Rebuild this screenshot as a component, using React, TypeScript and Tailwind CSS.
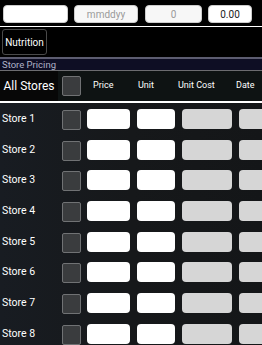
import React from "react";

const stores = ["Store 1", "Store 2", "Store 3", "Store 4", "Store 5", "Store 6", "Store 7", "Store 8"];

function Check() {
  return <div className="w-[19px] h-[20px] shrink-0 rounded-[2px] border border-[#707274] bg-[#3a3c3e]" />;
}

function StoreRow({ name }: { name: string }) {
  return (
    <div className="flex h-[30.67px] items-start">
      <div className="w-[62px] shrink-0 pl-[2px] pt-[10px] text-[10.5px] leading-[12px] text-white">{name}</div>
      <div className="mt-[7px]">
        <Check />
      </div>
      <div className="ml-[6px] mt-[6px] h-[20px] w-[43px] shrink-0 rounded-[4px] bg-white" />
      <div className="ml-[7px] mt-[6px] h-[20px] w-[38px] shrink-0 rounded-[4px] bg-white" />
      <div className="ml-[7px] mt-[6px] h-[20px] w-[50px] shrink-0 rounded-[4px] bg-[#d6d6d6]" />
      <div className="ml-[7px] mt-[6px] h-[20px] w-[40px] shrink-0 rounded-[4px] bg-[#d6d6d6]" />
    </div>
  );
}

export default function App() {
  return (
    <div className="w-[262px] h-[345px] overflow-hidden bg-black font-['Roboto',sans-serif]">
      {/* top inputs */}
      <div className="flex h-[26px] items-start pt-[5px]">
        <div className="ml-[3px] h-[18px] w-[65px] rounded-[4px] border border-[#ccc] bg-white" />
        <div className="ml-[6px] flex h-[18px] w-[64px] items-center justify-center rounded-[4px] border border-[#ccc] bg-[#f7f7f7] text-[10px] text-[#9a9a9a]">
          mmddyy
        </div>
        <div className="ml-[7px] flex h-[18px] w-[57px] items-center justify-center rounded-[4px] border border-[#ccc] bg-[#f7f7f7] text-[10px] text-[#9a9a9a]">
          0
        </div>
        <div className="ml-[6px] flex h-[18px] w-[44px] items-center justify-center rounded-[4px] border border-[#ccc] bg-white text-[10px] text-[#222]">
          0.00
        </div>
      </div>
      <div className="h-px bg-white" />

      {/* nutrition */}
      <div className="h-[30px] pl-[2px] pt-[2px]">
        <button className="flex h-[26px] w-[45px] items-center justify-center rounded-[3px] border border-[#4a4a4a] bg-black text-[10px] text-white">
          Nutrition
        </button>
      </div>
      <div className="h-[2px] bg-[#5c5c70]" />

      {/* store pricing band */}
      <div className="h-[11px] bg-[#0e0e24] pl-[2px] text-[9.5px] leading-[11px] text-[#aeb2c8]">Store Pricing</div>
      <div className="h-px bg-[#6c6c70]" />

      {/* header */}
      <div className="flex h-[30px] items-center whitespace-nowrap bg-[#0e1313] text-[9px] text-white">
        <div className="flex h-full w-[58px] shrink-0 items-center justify-center bg-[#070707] text-[12px]">
          All Stores
        </div>
        <div className="ml-[4px]">
          <Check />
        </div>
        <div className="ml-[12px] w-[45px] shrink-0">Price</div>
        <div className="w-[40px] shrink-0">Unit</div>
        <div className="w-[58px] shrink-0">Unit Cost</div>
        <div className="shrink-0">Date</div>
      </div>
      <div className="h-[2px] bg-white" />

      {/* rows */}
      <div className="bg-gradient-to-r from-[#181c22] via-[#16181a] to-[#141618]">
        {stores.map((s) => (
          <StoreRow key={s} name={s} />
        ))}
      </div>
    </div>
  );
}
